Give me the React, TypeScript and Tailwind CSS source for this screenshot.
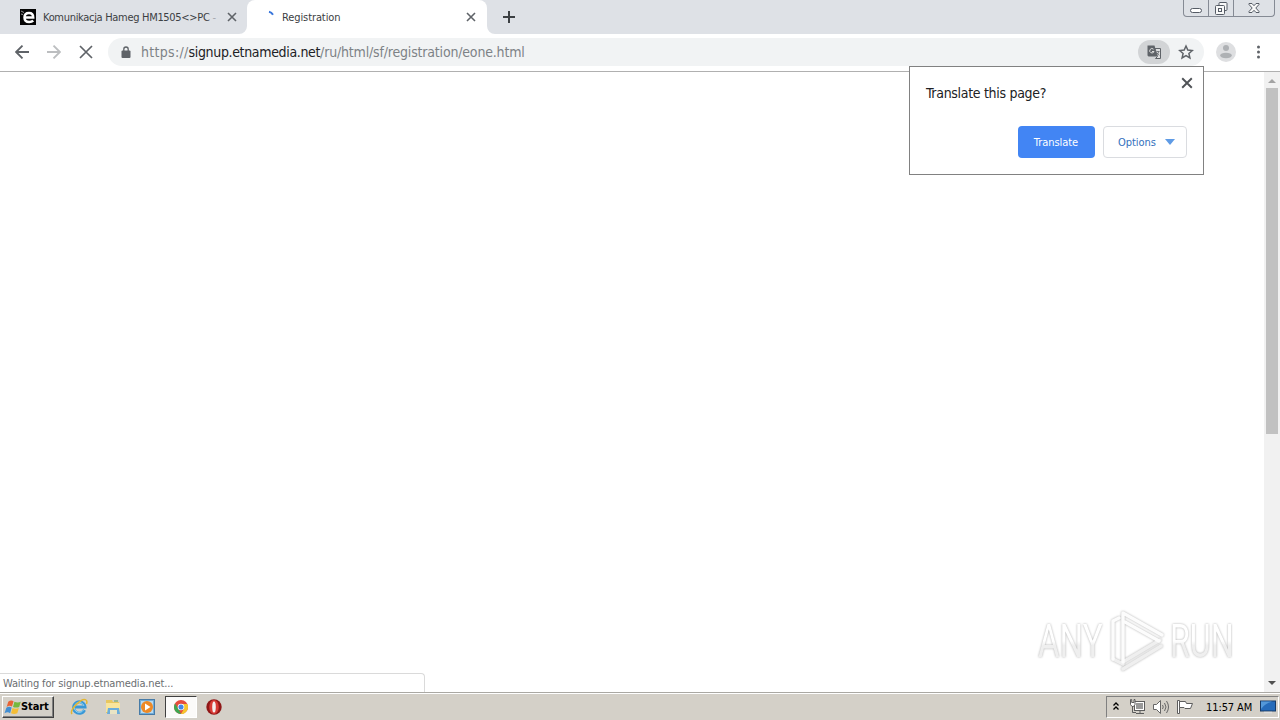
import React from 'react';

interface IconProps {
  className?: string;
}

const CrossIcon = ({ className = '' }: IconProps) => (
  <svg viewBox="0 0 10 10" className={className} fill="none" stroke="currentColor" strokeWidth="1.6">
    <path d="M1 1l8 8M9 1L1 9" />
  </svg>
);

const StopIcon = ({ className = '' }: IconProps) => (
  <svg viewBox="0 0 14 14" className={className} fill="none" stroke="currentColor" strokeWidth="1.7">
    <path d="M1 1l12 12M13 1L1 13" />
  </svg>
);

const ArrowIcon = ({ className = '' }: IconProps) => (
  <svg viewBox="0 0 14 14" className={className} fill="none" stroke="currentColor" strokeWidth="1.8">
    <path d="M14 7H1.5M7.5 .6L1.1 7l6.400 6.400" />
  </svg>
);

const TabStrip = () => (
  <div className="flex h-[34px] bg-[#dee1e6] text-[11px] text-[#3c4043]">
    <div className="flex h-full w-[247px] items-center pl-5">
      <svg viewBox="0 0 16 16" className="h-4 w-4 shrink-0">
        <rect width="16" height="16" fill="#050505" />
        <path d="M4.500 8.500h8.700C13.200 5.500 11.500 4 9 4 6 4 4.500 6 4.500 8.500c0 3 1.800 4.500 4.700 4.500 1.700 0 3-.4 4-1.400" fill="none" stroke="#fff" strokeWidth="2.500" />
        <path d="M1 2l3 1.500M1 5l2 .5" stroke="#999" />
      </svg>
      <span className="ml-[7px] w-[175px] whitespace-nowrap pt-[2px] tracking-[-0.31px]">
        Komunikacja Hameg HM1505&lt;&gt;PC <span className="text-[#a5a8ad]">-</span>
      </span>
      <CrossIcon className="ml-[9px] h-[10px] w-[10px] shrink-0 text-[#5f6368]" />
    </div>
    <div className="relative flex h-full w-60 items-center rounded-t-lg bg-white pl-[19px]">
      <svg viewBox="0 0 8 8" className="absolute -left-2 bottom-0 h-2 w-2">
        <path d="M8 0v8H0a8 8 0 0 0 8-8z" fill="#fff" />
      </svg>
      <svg viewBox="0 0 8 8" className="absolute -right-2 bottom-0 h-2 w-2">
        <path d="M0 0v8h8a8 8 0 0 1-8-8z" fill="#fff" />
      </svg>
      <svg viewBox="0 0 16 16" className="h-4 w-4" fill="none" stroke="#3976dc" strokeWidth="2">
        <path d="M3 2.700q2.500.5 4 3" />
      </svg>
      <span className="w-[184px] whitespace-nowrap pt-[2px] tracking-[-0.1px]">Registration</span>
      <CrossIcon className="h-[10px] w-[10px] text-[#5f6368]" />
    </div>
    <svg viewBox="0 0 12 12" className="ml-4 mt-[11px] h-3 w-3" stroke="#3c4043" strokeWidth="2">
      <path d="M6 0v12M0 6h12" />
    </svg>
    <div className="ml-auto mr-[5px] flex h-[17px] w-[92px] rounded-b border border-t-0 border-[#858a94] text-[#555b65]">
      <div className="flex w-[25px] items-end justify-center border-r border-[#858a94] pb-[3px]">
        <div className="h-[5px] w-3 rounded-sm border border-current bg-white" />
      </div>
      <div className="flex w-[25px] items-center justify-center border-r border-[#858a94]">
        <svg viewBox="0 0 13 13" className="h-[13px] w-[13px]" fill="#f8f8f8" stroke="currentColor">
          <rect x="4" y=".5" width="8" height="8" rx="1" />
          <rect x=".5" y="3.500" width="9" height="9" rx="1" />
          <rect x="3.500" y="6.500" width="3" height="3" />
        </svg>
      </div>
      <div className="flex flex-1 items-center justify-center">
        <svg viewBox="0 0 12 10" className="h-[10px] w-3" fill="#f8f8f8" stroke="currentColor">
          <path d="M1 .5h3l2 2.200L8 .5h3v1L7.800 5 11 8.500v1H8L6 7.300 4 9.500H1v-1L4.200 5 1 1.500z" />
        </svg>
      </div>
    </div>
  </div>
);

const Toolbar = () => (
  <div className="flex h-[38px] items-center border-b border-[#b0b0b0] bg-white pb-px text-[#5f6368]">
    <ArrowIcon className="ml-[15px] h-[14px] w-[14px]" />
    <ArrowIcon className="ml-[18px] h-[14px] w-[14px] rotate-180 text-[#bcbec0]" />
    <StopIcon className="ml-[18px] h-[14px] w-[14px]" />
    <div className="ml-[15px] flex h-7 w-[1096px] items-center rounded-full bg-[#f1f3f4]">
      <svg viewBox="0 0 10 13" className="ml-[13px] h-[13px] w-[10px]">
        <rect x=".5" y="4.500" width="9" height="7.500" rx="1" fill="#5f6368" />
        <path d="M2.800 5V3.200a2.200 2.200 0 0 1 4.400 0V5" fill="none" stroke="#5f6368" strokeWidth="1.300" />
      </svg>
      <span className="ml-[10px] flex-1 whitespace-nowrap text-[14px] tracking-[-0.18px] text-[#7d8286]">
        <span className="tracking-[0.3px]">https://</span>
        <span className="tracking-[-0.34px] text-[#202124]">signup.etnamedia.net</span>
        /ru/html/sf/registration/eone.html
      </span>
      <div className="flex h-6 w-8 items-center justify-center rounded-full bg-[#d2d4d6]">
        <svg viewBox="0 0 16 16" className="h-4 w-4">
          <path d="M1.500 1.500h7l3 11h-9l-1-1z" fill="#5f6368" />
          <path d="M9 4.500h5.500v10H9.500l2-2z" fill="#dedfe0" stroke="#5f6368" />
          <path d="M7.500 5.200A2.200 2.200 0 1 0 8 7.500H6" fill="none" stroke="#ddd" />
          <path d="M10.500 7.500h3M12.800 7.500q-.5 2-2 3M11.200 9l2 2.500" fill="none" stroke="#5f6368" strokeWidth=".8" />
        </svg>
      </div>
      <svg viewBox="0 0 16 16" className="ml-2 mr-[10px] h-4 w-4" fill="none" stroke="#5f6368" strokeWidth="1.500">
        <path d="M8 2l1.800 4.100 4.500.4-3.400 3 1 4.400L8 11.600 4.100 13.900l1-4.400-3.400-3 4.500-.4z" />
      </svg>
    </div>
    <svg viewBox="0 0 20 20" className="ml-3 h-5 w-5">
      <circle cx="10" cy="10" r="10" fill="#dedfe1" />
      <circle cx="10" cy="6" r="3" fill="#aeb1b4" />
      <ellipse cx="10" cy="13.500" rx="5.800" ry="2.700" fill="#aeb1b4" />
    </svg>
    <svg viewBox="0 0 4 14" className="ml-5 h-[14px] w-1" fill="#5f6368">
      <circle cx="2.500" cy="2" r="1.500" />
      <circle cx="2.500" cy="7" r="1.500" />
      <circle cx="2.500" cy="12" r="1.500" />
    </svg>
  </div>
);

const TranslateBubble = () => (
  <div className="absolute left-[909px] top-[66px] h-[109px] w-[295px] border border-[#818181] bg-white px-4">
    <CrossIcon className="absolute right-[10px] top-[10px] h-3 w-3 text-[#505357]" />
    <p className="mt-[17px] h-5 whitespace-nowrap text-[14px] leading-[18px] tracking-[-0.3px] text-[#202124]">Translate this page?</p>
    <div className="mt-[22px] flex justify-end gap-2 text-[11px] tracking-[-0.05px]">
      <button className="h-8 w-[77px] rounded bg-[#4285f4] pr-px pt-[2px] text-white">Translate</button>
      <button className="flex h-8 w-[84px] items-center rounded border border-[#dadce0] pl-[14px] text-[#3371bd]">
        <span className="pt-[2px]">Options</span>
        <svg viewBox="0 0 10 6" className="ml-auto mr-[11px] h-[6px] w-[10px]">
          <path d="M0 0h10L5 6z" fill="#5f9be5" />
        </svg>
      </button>
    </div>
  </div>
);

const Watermark = () => (
  <div className="absolute left-[1038px] top-[608px] flex h-[66px] w-[200px] items-center font-['Roboto'] text-[46px] leading-none drop-shadow-[0_0_1px_#b0b0b0]">
    <div className="w-[70px]">
      <span className="block w-max origin-left scale-x-[0.72] bg-linear-to-b from-white from-50% to-[#efefef] to-60% bg-clip-text text-transparent">
        ANY
      </span>
    </div>
    <svg viewBox="0 0 60 64" className="h-16 w-[60px] shrink-0" fill="none" strokeWidth="3.500" strokeLinejoin="round" strokeLinecap="round">
      <path d="M15 53l37-22M5 50l10 5" stroke="#efefef" />
      <path d="M15 60l38-23" stroke="#efefef" />
      <path d="M11 9l-6 3v38" stroke="#fcfcfc" />
      <path d="M15 53V4l39 22" stroke="#fcfcfc" />
      <path d="M17 13l34 19" stroke="#fcfcfc" />
    </svg>
    <div className="ml-[2px] w-16">
      <span className="block w-max origin-left scale-x-[0.7] bg-linear-to-b from-white from-50% to-[#efefef] to-60% bg-clip-text text-transparent">
        RUN
      </span>
    </div>
  </div>
);

const StartLogo = () => (
  <svg viewBox="0 0 16 16" className="h-[17px] w-[17px]">
    <path d="M4 2.500Q6.500.500 9 2L7.500 7Q5 5.500 2.500 7.500z" fill="#e86335" />
    <path d="M9.800 2.500q3 1.500 6 0l-1.500 5q-3 1.200-5.800 0z" fill="#76b83d" />
    <path d="M2.200 8.300Q4.500 6.500 7.200 8l-1.400 5.300Q3.300 11.500.5 13.500z" fill="#428ed2" />
    <path d="M8 8.500q3 1.500 6 0l-1.500 5q-3 1.300-5.900 0z" fill="#f4bd35" />
  </svg>
);

const Taskbar = () => (
  <div className="flex h-7 items-center border-t border-[#aaa8a3] bg-[#d4d0c8] text-[11px] text-black shadow-[inset_0_1px_0_#fff]">
    <button className="ml-[2px] mt-px flex h-[22px] w-[52px] items-center whitespace-nowrap border border-b-[#404040] border-l-white border-r-[#404040] border-t-white pl-px font-bold tracking-[-0.08px] shadow-[inset_-1px_-1px_0_#808080]">
      <StartLogo />
      <span className="pt-px">Start</span>
    </button>
    <svg viewBox="0 0 18 18" className="ml-4 h-[18px] w-[18px]">
      <path d="M14.500 12a5.700 5.700 0 1 1 .5-3H5" fill="none" stroke="#3998d7" strokeWidth="3" />
      <path d="M13.500 12a5 5 0 1 1 .5-4" fill="none" stroke="#8fd3f3" />
      <path d="M2 16C-1 12 12-1 16 2q1.500 1 .5 4" fill="none" stroke="#e3b632" strokeWidth="1.500" />
    </svg>
    <svg viewBox="0 0 16 16" className="ml-[17px] h-4 w-4">
      <path d="M1 1h6l1 2h6v11H1z" fill="#e8c760" />
      <path d="M1 4h14v9H1z" fill="#f9e59c" />
      <path d="M3 9h11l1 6H2z" fill="#6baddb" />
      <path d="M5 11h7v4H5z" fill="#e9e4c4" />
      <path d="M9 2h4" stroke="#60a05f" />
    </svg>
    <svg viewBox="0 0 16 16" className="ml-[18px] h-4 w-4">
      <rect x=".5" y=".5" width="15" height="15" fill="#70acd9" stroke="#477ba7" />
      <rect x="2" y="2" width="12" height="12" fill="#b9daf0" />
      <circle cx="8" cy="8" r="6" fill="#ed8926" />
      <path d="M6 4.500L11.500 8 6 11.500z" fill="#fff" />
    </svg>
    <div className="ml-[10px] mt-px flex h-[22px] w-8 items-center justify-center border border-b-white border-l-[#404040] border-r-white border-t-[#404040] bg-[#fbfaf9]">
      <svg viewBox="0 0 16 16" className="h-[14px] w-[14px]">
        <circle cx="8" cy="8" r="8" fill="#e54c3c" />
        <path d="M1.100 4L5 10l3 6A8 8 0 0 1 1.100 4z" fill="#3da650" />
        <path d="M8 4.500h7.200A8 8 0 0 1 8 16l3.500-6z" fill="#f5c62d" />
        <circle cx="8" cy="8" r="3.800" fill="#fff" />
        <circle cx="8" cy="8" r="2.900" fill="#4285e8" />
      </svg>
    </div>
    <svg viewBox="0 0 16 16" className="ml-[9px] mt-px h-4 w-4">
      <circle cx="8" cy="8" r="7.700" fill="#8f1717" />
      <ellipse cx="8" cy="8" rx="4.800" ry="7" fill="#d83b36" />
      <ellipse cx="8" cy="8" rx="1.800" ry="5.500" fill="#f4eeee" />
    </svg>
    <div className="ml-auto mr-px mt-px flex h-[22px] w-[173px] items-center border border-b-white border-l-[#808080] border-r-white border-t-[#808080]">
      <svg viewBox="0 0 6 8" className="mb-[2px] ml-[6px] h-2 w-[6px]" fill="none" stroke="#000" strokeWidth="1.300">
        <path d="M.5 3.500L3 1l2.500 2.500M.5 7.500L3 5l2.500 2.500" />
      </svg>
      <svg viewBox="0 0 16 16" className="ml-[10px] h-4 w-4" stroke="#5d5d5d">
        <rect x="5.500" y="2.500" width="10" height="9" fill="#fff" />
        <rect x="7" y="4" width="7" height="6" fill="#999" stroke="none" />
        <path d="M7 14.500h8M11 12v2M3.500 8v5.500H7" fill="none" />
        <path d="M1.500.500v5l1.500 2h1.500l1.500-2v-5H5v3H2.700v-3z" fill="#fff" />
      </svg>
      <svg viewBox="0 0 16 16" className="ml-2 h-4 w-4" fill="none" stroke="#666">
        <path d="M.5 5.500h3l4-4v13l-4-4h-3z" fill="#fff" />
        <path d="M9.500 6q1.500 2 0 4M11.500 4q3 4 0 8M13.500 2q4 6 0 12" />
      </svg>
      <svg viewBox="0 0 16 16" className="ml-2 h-4 w-4" fill="#fff" stroke="#5d5d5d">
        <path d="M2.500 1.500v13h-2v-13z" />
        <path d="M2.500 2.500h6l1 2h6l-2 5H8l-1-1H2.500z" />
      </svg>
      <span className="ml-[13px] w-[50px] whitespace-nowrap pt-[2px] tracking-[-0.1px]">11:57 AM</span>
      <svg viewBox="0 0 16 14" className="ml-auto mr-[2px] h-[14px] w-4">
        <rect x=".5" y="1" width="15" height="10" fill="#256bba" stroke="#173a66" />
        <path d="M1 9Q5 3 13 1.500H1z" fill="#5398d9" />
        <path d="M4 12.500h8" stroke="#ddd" strokeWidth="1.500" />
      </svg>
    </div>
  </div>
);

export default function App() {
  return (
    <div className="relative flex h-[720px] w-[1280px] flex-col overflow-hidden bg-white font-['Tahoma','DejaVu_Sans_Condensed','DejaVu_Sans',sans-serif]">
      <TabStrip />
      <Toolbar />
      <main className="flex min-h-0 flex-1">
        <div className="flex flex-1 items-end">
          <div className="h-[19px] w-[425px] rounded-tr border-r border-t border-[#dadada] pl-[3px] text-[11px] leading-[19px] tracking-[-0.14px] text-[#6b6e71]">
            Waiting for signup.etnamedia.net...
          </div>
        </div>
        <div className="flex w-4 flex-col items-center bg-[#f1f1f1]">
          <svg viewBox="0 0 8 4" className="mt-[7px] h-1 w-2">
            <path d="M0 4l4-4 4 4z" fill="#a3a3a3" />
          </svg>
          <div className="mt-[5px] h-[346px] w-3 bg-[#c1c1c1]" />
          <svg viewBox="0 0 8 4" className="mb-[7px] mt-auto h-1 w-2">
            <path d="M0 0h8L4 4z" fill="#505050" />
          </svg>
        </div>
      </main>
      <Taskbar />
      <TranslateBubble />
      <Watermark />
    </div>
  );
}
